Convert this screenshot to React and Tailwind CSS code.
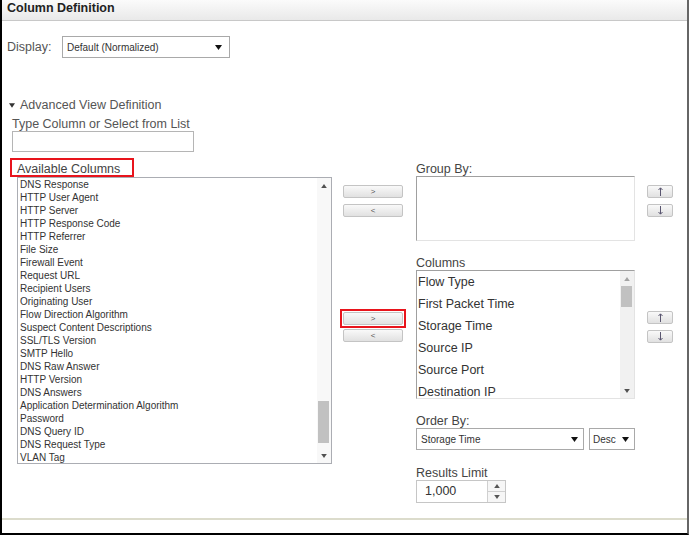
import React from "react";

const Down = ({ w = 7, h = 5, c = "#111" }) => (
  <svg width={w} height={h} viewBox="0 0 7 5" className="block">
    <path d="M0 0H7L3.5 5Z" fill={c} />
  </svg>
);
const Up = ({ w = 7, h = 5, c = "#111" }) => (
  <svg width={w} height={h} viewBox="0 0 7 5" className="block">
    <path d="M0 5H7L3.5 0Z" fill={c} />
  </svg>
);

const ArrowUp = () => (
  <svg width="5" height="9" viewBox="0 0 5 9" className="block">
    <path d="M2.5 1V9M0.5 3L2.5 0.8L4.5 3" stroke="#5a5670" strokeWidth="1" fill="none" />
  </svg>
);
const ArrowDown = () => (
  <svg width="5" height="9" viewBox="0 0 5 9" className="block">
    <path d="M2.5 0V8M0.5 6L2.5 8.2L4.5 6" stroke="#5a5670" strokeWidth="1" fill="none" />
  </svg>
);

const Btn = ({ children, wide = true }) => (
  <div
    className={`${wide ? "w-[60px] text-[8px]" : "w-[26px] text-[10px]"} h-[13px] border border-[#c4c4c4] rounded-[2px] bg-linear-to-b from-[#f9f9f9] to-[#e1e1e1] flex items-center justify-center leading-none text-[#555]`}
  >
    {children}
  </div>
);

const available = [
  "DNS Response",
  "HTTP User Agent",
  "HTTP Server",
  "HTTP Response Code",
  "HTTP Referrer",
  "File Size",
  "Firewall Event",
  "Request URL",
  "Recipient Users",
  "Originating User",
  "Flow Direction Algorithm",
  "Suspect Content Descriptions",
  "SSL/TLS Version",
  "SMTP Hello",
  "DNS Raw Answer",
  "HTTP Version",
  "DNS Answers",
  "Application Determination Algorithm",
  "Password",
  "DNS Query ID",
  "DNS Request Type",
  "VLAN Tag",
];

const columns = [
  "Flow Type",
  "First Packet Time",
  "Storage Time",
  "Source IP",
  "Source Port",
  "Destination IP",
];

const Label = ({ children, className = "" }) => (
  <div className={`h-[16px] text-[12.5px] leading-[19px] text-[#444] whitespace-nowrap ${className}`}>{children}</div>
);

export default function App() {
  return (
    <div className="w-[689px] h-[535px] bg-white border-l-2 border-l-black border-r-2 border-r-[#666] border-b-2 border-b-black flex flex-col font-['Liberation_Sans',Arial,sans-serif] overflow-hidden">
      {/* header */}
      <div className="h-[21px] shrink-0 border-b border-[#c8c8c8] bg-linear-to-b from-[#fbfbfb] to-[#e9e9e9] pl-[5px]">
        <div className="text-[12.5px] leading-[16px] font-bold text-[#222]">Column Definition</div>
      </div>

      <div className="flex-1 flex flex-col">
        {/* display row */}
        <div className="mt-[15px] pl-[5px] flex items-center h-[22px]">
          <div className="w-[55px] text-[12.5px] text-[#555]">Display:</div>
          <div className="w-[168px] h-[22px] border border-[#a9a9a9] bg-white flex items-center justify-between pl-[4px] pr-[7px]">
            <span className="text-[10px] text-[#333]">Default (Normalized)</span>
            <Down />
          </div>
        </div>

        {/* advanced heading */}
        <div className="mt-[38px] pl-[7px] flex items-center h-[16px] pt-[2px]">
          <Down w={6} h={5} c="#333" />
          <span className="ml-[5px] text-[12.5px] leading-[16px] text-[#555]">Advanced View Definition</span>
        </div>
        <div className="mt-[3px] pl-[10px] h-[16px] text-[12.5px] leading-[18px] text-[#555]">
          Type Column or Select from List
        </div>
        <div className="ml-[10px] w-[182px] h-[21px] border border-[#b5b5b5] bg-white" />

        {/* main row */}
        <div className="mt-[6px] ml-[8px] flex">
          {/* left column */}
          <div className="flex flex-col">
            <div className="w-[124px] h-[19px] border-2 border-[#e8141c] pl-[5px] text-[12.5px] leading-[18px] text-[#444] whitespace-nowrap">
              Available Columns
            </div>
            <div className="ml-[7px] w-[315px] h-[287px] border border-[#abadb3] flex bg-white">
              <div className="flex-1 overflow-hidden pl-[2px]">
                {available.map((a) => (
                  <div key={a} className="text-[10px] leading-[13px] text-[#333] whitespace-nowrap">
                    {a}
                  </div>
                ))}
              </div>
              <div className="w-[14px] flex flex-col bg-[#f8f8f8]">
                <div className="h-[15px] flex items-center justify-center">
                  <Up w={6} h={4} c="#505050" />
                </div>
                <div className="flex-1">
                  <div className="mt-[208px] ml-[1px] w-[11px] h-[42px] bg-[#c1c1c1]" />
                </div>
                <div className="h-[15px] flex items-center justify-center">
                  <Down w={6} h={4} c="#505050" />
                </div>
              </div>
            </div>
          </div>

          {/* middle buttons */}
          <div className="ml-[8px] w-[66px] flex flex-col items-center">
            <div className="mt-[27px]"><Btn>&gt;</Btn></div>
            <div className="mt-[6px]"><Btn>&lt;</Btn></div>
            <div className="mt-[92px] border-2 border-[#e8141c] p-[1px]"><Btn>&gt;</Btn></div>
            <div className="mt-[1px]"><Btn>&lt;</Btn></div>
          </div>

          {/* right column */}
          <div className="ml-[10px] w-[219px] flex flex-col">
            <Label className="mt-[2px]">Group By:</Label>
            <div className="h-[65px] border border-t-[#a0a0a0] border-l-[#a0a0a0] border-r-[#e3e3e3] border-b-[#e3e3e3] bg-white" />

            <Label className="mt-[13px]">Columns</Label>
            <div className="h-[129px] border border-t-[#a0a0a0] border-l-[#a0a0a0] border-r-[#e3e3e3] border-b-[#e3e3e3] bg-white flex">
              <div className="flex-1 overflow-hidden pl-[1px]">
                {columns.map((c) => (
                  <div key={c} className="text-[12.5px] leading-[22px] text-[#333] whitespace-nowrap">
                    {c}
                  </div>
                ))}
              </div>
              <div className="w-[14px] flex flex-col bg-[#f1f1f1]">
                <div className="h-[15px] flex items-center justify-center">
                  <Up w={6} h={4} c="#a3a3a3" />
                </div>
                <div className="flex-1">
                  <div className="ml-[1px] w-[11px] h-[21px] bg-[#c1c1c1]" />
                </div>
                <div className="h-[15px] flex items-center justify-center">
                  <Down w={6} h={4} c="#505050" />
                </div>
              </div>
            </div>

            <Label className="mt-[13px]">Order By:</Label>
            <div className="flex gap-[5px]">
              <div className="w-[168px] h-[22px] border border-[#a9a9a9] bg-white flex items-center justify-between pl-[4px] pr-[5px]">
                <span className="text-[10px] text-[#333]">Storage Time</span>
                <Down />
              </div>
              <div className="w-[46px] h-[22px] border border-[#a9a9a9] bg-white flex items-center justify-between pl-[3px] pr-[5px]">
                <span className="text-[10px] text-[#333]">Desc</span>
                <Down />
              </div>
            </div>

            <Label className="mt-[14px]">Results Limit</Label>
            <div className="w-[90px] h-[23px] border border-[#c6c6c6] bg-white flex">
              <div className="flex-1 flex items-center pl-[8px] text-[12.5px] text-[#333]">1,000</div>
              <div className="w-[18px] border-l border-[#d0d0d0] flex flex-col">
                <div className="flex-1 flex items-center justify-center border-b border-[#d0d0d0] bg-[#f6f6f6]">
                  <Up w={6} h={4} c="#555" />
                </div>
                <div className="flex-1 flex items-center justify-center bg-[#f6f6f6]">
                  <Down w={6} h={4} c="#555" />
                </div>
              </div>
            </div>
          </div>

          {/* up/down buttons */}
          <div className="ml-[12px] w-[26px] flex flex-col">
            <div className="mt-[27px]"><Btn wide={false}><ArrowUp /></Btn></div>
            <div className="mt-[6px]"><Btn wide={false}><ArrowDown /></Btn></div>
            <div className="mt-[94px]"><Btn wide={false}><ArrowUp /></Btn></div>
            <div className="mt-[6px]"><Btn wide={false}><ArrowDown /></Btn></div>
          </div>
        </div>
      </div>

      {/* footer */}
      <div className="h-[15px] shrink-0 border-t-2 border-[#dcdccc]" />
    </div>
  );
}
